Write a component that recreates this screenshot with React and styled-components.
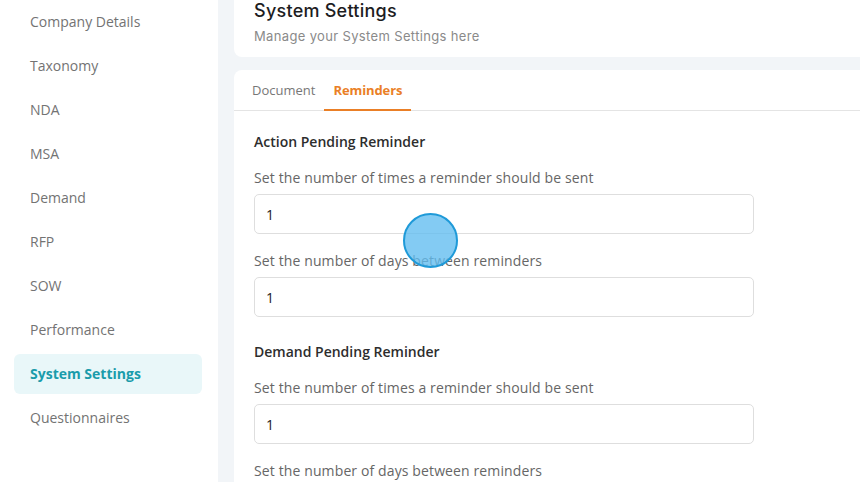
import styled, { createGlobalStyle } from 'styled-components';

const GlobalStyle = createGlobalStyle`
  html, body {
    margin: 0;
    padding: 0;
    background: #f2f5f8;
    font-family: 'Open Sans', 'Liberation Sans', sans-serif;
  }
  * {
    box-sizing: border-box;
  }
`;

const Page = styled.div`
  position: relative;
  display: flex;
  height: 482px;
  overflow: hidden;
`;

const Sidebar = styled.nav`
  width: 218px;
  flex-shrink: 0;
  background: #ffffff;
  padding: 1px 16px 0 14px;
  display: flex;
  flex-direction: column;
  gap: 4.1px;
`;

const MenuItem = styled.div`
  height: 40px;
  flex-shrink: 0;
  display: flex;
  align-items: center;
  padding-left: 16px;
  border-radius: 6px;
  font-size: 14px;
  color: ${p => (p.$active ? '#1a9cab' : '#737373')};
  font-weight: ${p => (p.$active ? 700 : 400)};
  background: ${p => (p.$active ? '#e9f7f9' : 'transparent')};
`;

const Main = styled.main`
  flex: 1;
  padding-left: 16px;
  display: flex;
  flex-direction: column;
  gap: 13px;
`;

const HeaderCard = styled.section`
  background: #ffffff;
  border-radius: 0 0 0 8px;
  padding: 0 20px 11px;
`;

const Title = styled.h1`
  margin: 0;
  font-family: 'Inter', 'Open Sans', sans-serif;
  font-size: 18px;
  line-height: 22px;
  font-weight: 500;
  letter-spacing: 0.25px;
  color: #1d1d1f;
`;

const Subtitle = styled.p`
  margin: 4px 0 0;
  font-family: 'Inter', 'Open Sans', sans-serif;
  font-size: 13px;
  line-height: 20px;
  letter-spacing: 0.35px;
  color: #8a8a8a;
`;

const ContentCard = styled.section`
  flex: 1;
  background: #ffffff;
  border-radius: 8px 0 0 0;
`;

const TabBar = styled.div`
  display: flex;
  height: 41px;
  padding-left: 9px;
  border-bottom: 1px solid #e4e4e4;
`;

const Tab = styled.div`
  display: flex;
  align-items: center;
  padding: 1px 9px 0;
  font-size: 13px;
  color: ${p => (p.$active ? '#ea7f26' : '#777777')};
  font-weight: ${p => (p.$active ? 700 : 400)};
  letter-spacing: ${p => (p.$active ? '-0.1px' : '0')};
  border-bottom: 2px solid ${p => (p.$active ? '#ea7f26' : 'transparent')};
  margin-bottom: -1px;
`;

const Body = styled.div`
  padding: 21px 20px 0;
  width: 520px;
`;

const Section = styled.div`
  margin-bottom: 25px;
`;

const SectionTitle = styled.h2`
  margin: 0 0 16px;
  font-size: 14px;
  line-height: 20px;
  font-weight: 600;
  color: #2d2d2d;
`;

const Field = styled.div`
  display: flex;
  flex-direction: column;
  gap: 6px;
  margin-bottom: 17px;
`;

const Label = styled.label`
  font-size: 14px;
  line-height: 20px;
  letter-spacing: 0.12px;
  color: #666666;
`;

const Input = styled.input`
  height: 40px;
  width: 500px;
  border: 1px solid #dedede;
  border-radius: 5px;
  padding: 0 11px;
  font-family: 'Open Sans', 'Liberation Sans', sans-serif;
  font-size: 14px;
  color: #222222;
  background: #ffffff;
  outline: none;
`;

const Cursor = styled.div`
  position: absolute;
  left: 403px;
  top: 213px;
  width: 55px;
  height: 55px;
  border-radius: 50%;
  background: rgba(96, 188, 240, 0.78);
  border: 2px solid #1f9ad8;
  pointer-events: none;
`;

const menu = [
  'Company Details',
  'Taxonomy',
  'NDA',
  'MSA',
  'Demand',
  'RFP',
  'SOW',
  'Performance',
  'System Settings',
  'Questionnaires',
];

const sections = [
  {
    title: 'Action Pending Reminder',
    fields: [
      'Set the number of times a reminder should be sent',
      'Set the number of days between reminders',
    ],
  },
  {
    title: 'Demand Pending Reminder',
    fields: [
      'Set the number of times a reminder should be sent',
      'Set the number of days between reminders',
    ],
  },
];

const App = () => {
  return (
    <>
      <GlobalStyle />
      <Page>
        <Sidebar>
          {menu.map(item => (
            <MenuItem key={item} $active={item === 'System Settings'}>
              {item}
            </MenuItem>
          ))}
        </Sidebar>
        <Main>
          <HeaderCard>
            <Title>System Settings</Title>
            <Subtitle>Manage your System Settings here</Subtitle>
          </HeaderCard>
          <ContentCard>
            <TabBar>
              <Tab>Document</Tab>
              <Tab $active>Reminders</Tab>
            </TabBar>
            <Body>
              {sections.map(section => (
                <Section key={section.title}>
                  <SectionTitle>{section.title}</SectionTitle>
                  {section.fields.map(label => (
                    <Field key={label}>
                      <Label>{label}</Label>
                      <Input defaultValue="1" />
                    </Field>
                  ))}
                </Section>
              ))}
            </Body>
          </ContentCard>
        </Main>
        <Cursor />
      </Page>
    </>
  );
};

export default App;
